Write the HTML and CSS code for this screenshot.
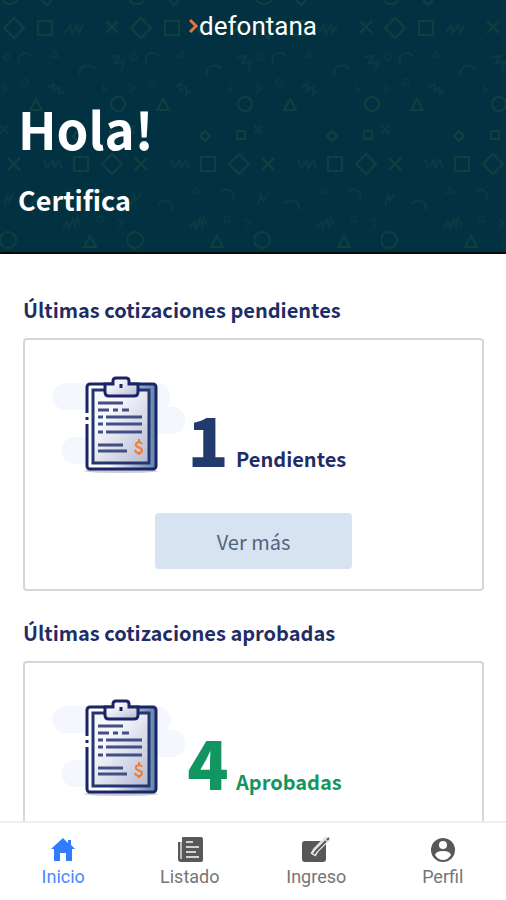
FILE: index.html
```
<!DOCTYPE html>
<html lang="es">
<head>
    <meta charset="UTF-8">
    <meta name="viewport" content="width=device-width, initial-scale=1.0">
    <title>Defontana</title>
    <link rel="stylesheet" href="styles.css">
</head>
<body>

    <header class="cabecera">
        <svg class="fondo" aria-hidden="true">
            <defs>
                <pattern id="figuras" width="127" height="254" patternUnits="userSpaceOnUse">
                    <g fill="none" stroke="#0e4040" stroke-width="2">
                        <path d="M14 18l10 10-10 10L4 28zM38 21h14v14H38zM106 21l12 12M118 21l-12 12"/>
                        <path d="M3 0a7 4 0 0 0 14 0M42 0l5 5 5-5"/>
                        <path d="M112 154l10 10-10 10-10-10zM74 157h14v14H74zM8 158l12 12M20 158L8 170"/>
                        <circle cx="118" cy="104" r="7"/>
                        <circle cx="8" cy="240" r="8"/>
                        <path d="M36 99l6 11H30zM90 236l6 11H84z"/>
                        <path d="M78 131l5 5-5 5-5-5zM110 131h8v8h-8z"/>
                    </g>
                    <g fill="none" stroke="#0a3b42" stroke-width="2">
                        <path d="M65 33l5-8 2 8 5-8 2 8 4-8M44 160l3 8 6-8 1 8 5-8 3 8"/>
                        <path d="M19 65c-3-14 9-14 13-9M80 75c-2-10 10-12 15-6"/>
                        <path d="M95 191c8-4 13 3 11 10M31 204c5-6 15-4 14 6"/>
                        <path d="M111 57l8-1-4 7 9-1-3 9M48 87l6-3-1 7 6-4 0 7 5-3"/>
                        <path d="M63 228l4-6 2 6 4-9 2 7 2-8 3 7M4 205l3-10 2 6 5-8"/>
                        <path d="M0 125l8 9M8 125l-8 9"/>
                    </g>
                    <g fill="none" stroke="#063744" stroke-width="2">
                        <path d="M55 51l3 6h-6zM69 187l4 6h-8zM103 84v7l4-2M2 84l5 4-5 5M117 219l6 4-5 6"/>
                        <circle cx="25" cy="82" r="3"/>
                        <circle cx="7" cy="57" r="3"/>
                        <circle cx="100" cy="219" r="3"/>
                    </g>
                </pattern>
            </defs>
            <rect width="100%" height="100%" fill="url(#figuras)"/>
        </svg>
        <div class="logo">
            <svg width="10" height="16" viewBox="0 0 10 16" aria-hidden="true">
                <path d="M1 2l6 6-6 6" fill="none" stroke="#e0763a" stroke-width="3"/>
            </svg>
            <span>defontana</span>
        </div>
        <h1>Hola!</h1>
        <p class="empresa">Certifica</p>
    </header>

    <main class="contenido">
        <section>
            <h2>Últimas cotizaciones pendientes</h2>
            <div class="tarjeta">
                <div class="resumen">
                    <svg class="dibujo" width="134" height="100" viewBox="0 0 134 100" aria-hidden="true">
                        <defs>
                            <linearGradient id="hoja" x1="0" y1="0" x2="1" y2="1">
                                <stop offset="0.3" stop-color="#f6f8fd"/>
                                <stop offset="1" stop-color="#b5b9d0"/>
                            </linearGradient>
                            <linearGradient id="tabla" x1="0" y1="0" x2="1" y2="0">
                                <stop offset="0.3" stop-color="#ffffff"/>
                                <stop offset="1" stop-color="#5f82ac"/>
                            </linearGradient>
                        </defs>
                        <g id="portapapeles">
                            <path d="M14 7h89a14 14 0 0 1 11 24h6a13 13 0 0 1 0 27h-20v30H23a13 13 0 0 1 0-27h20V34H14a13 13 0 0 1 0-27z" fill="#f4f7fd"/>
                            <ellipse cx="69" cy="95" rx="37" ry="2" fill="#c9ccd6"/>
                            <rect x="35" y="8" width="69" height="85" rx="3" fill="url(#tabla)" stroke="#1b2466" stroke-width="3"/>
                            <rect x="41" y="14" width="56" height="73" fill="url(#hoja)" stroke="#27356f" stroke-width="3"/>
                            <path d="M32 37h6v11h-6z" fill="#fff"/>
                            <path d="M35 41v3" stroke="#1b2466" stroke-width="3"/>
                            <path d="M53 8h8V5q0-3 3-3h10q3 0 3 3v3h9v8q0 4-4 4H57q-4 0-4-4z" fill="url(#hoja)" stroke="#1b2466" stroke-width="3"/>
                            <path d="M69 8v4" stroke="#1b2466" stroke-width="3"/>
                            <path d="M46 27h25M46 69h25M46 75h29M54 41h36M54 48h36M54 56h36M46 41h5M46 48h5M46 56h5M46 34h11M61 34h5M70 34h7" stroke="#414f82" stroke-width="3"/>
                            <path d="M90 68c-1-3-7-2-6 1 0 3 6 2 6 5 0 4-6 4-7 0M87 63v3M87 76v3" fill="none" stroke="#f47b2c" stroke-width="2"/>
                        </g>
                    </svg>
                    <span class="numero">1</span>
                    <span class="estado">Pendientes</span>
                </div>
                <button class="boton" type="button">Ver más</button>
            </div>
        </section>

        <section>
            <h2>Últimas cotizaciones aprobadas</h2>
            <div class="tarjeta aprobadas">
                <div class="resumen">
                    <svg class="dibujo" width="134" height="100" viewBox="0 0 134 100" aria-hidden="true">
                        <use href="#portapapeles"/>
                    </svg>
                    <span class="numero">4</span>
                    <span class="estado">Aprobadas</span>
                </div>
            </div>
        </section>
    </main>

    <nav class="menu">
        <a href="#" class="activo">
            <svg width="26" height="26" viewBox="0 0 26 26" aria-hidden="true">
                <path d="M13 1L1 12h3v12h6v-8h6v8h6V12h3l-4-4V3h-3v3z"/>
            </svg>
            Inicio
        </a>
        <a href="#">
            <svg width="26" height="26" viewBox="0 0 26 26" aria-hidden="true">
                <path d="M1 5h3v17h1V1q0-1 1-1h18q2 0 2 2v21q0 2-2 2H4q-3 0-3-3z"/>
                <path d="M9 5h7M9 10h13M9 15h10M9 20h13" stroke="#d2d2d2" stroke-width="2"/>
                <path d="M4 5v17" stroke="#bdbdbd" stroke-width="2"/>
            </svg>
            Listado
        </a>
        <a href="#">
            <svg width="28" height="26" viewBox="0 0 28 26" aria-hidden="true">
                <rect y="4" width="24" height="21" rx="3"/>
                <path d="M26 1L14 13l-3 5" fill="none" stroke="#e4e4e4" stroke-width="6" stroke-linejoin="round"/>
                <path d="M24 4L14 14l-2 3M25 3l2-2" fill="none" stroke="#585858" stroke-width="2"/>
            </svg>
            Ingreso
        </a>
        <a href="#">
            <svg width="26" height="26" viewBox="0 0 26 26" aria-hidden="true">
                <circle cx="13" cy="13" r="12"/>
                <circle cx="13" cy="8" r="4" fill="#fff"/>
                <path d="M5 18q1-4 8-4t8 4q-3 5-8 5t-8-5z" fill="#fff"/>
            </svg>
            Perfil
        </a>
    </nav>

</body>
</html>
```
FILE: styles.css
```
@charset "utf-8";

*{
    padding: 0;
    margin: 0;
    box-sizing: border-box;
}
body{
    display: flex;
    flex-direction: column;
    height: 100vh;
    background-color: white;
    color: #1f2d66;
    font-family: "Noto Sans CJK SC", "Noto Sans", sans-serif;
}
.cabecera{
    position: relative;
    flex: none;
    padding: 8px 18px 34px;
    background-color: #023142;
    border-bottom: 2px solid #0a0a0a;
    color: white;
}
.fondo{
    position: absolute;
    top: 0;
    left: 0;
    width: 100%;
    height: 100%;
}
.logo{
    position: relative;
    display: flex;
    justify-content: center;
    align-items: center;
    font: 26px/36px Roboto, sans-serif;
}
.cabecera h1{
    position: relative;
    margin-top: 50px;
    font-size: 51px;
    line-height: 68px;
}
.empresa{
    position: relative;
    margin-top: 20px;
    font-size: 27px;
    font-weight: bold;
    line-height: 36px;
}
.contenido{
    flex: 1;
    min-height: 0;
    padding: 42px 22px 0 23px;
    overflow: hidden auto;
    scrollbar-width: none;
}
section{
    margin-bottom: 28px;
}
h2{
    margin-bottom: 14px;
    font-size: 20px;
    line-height: 28px;
}
.tarjeta{
    min-height: 253px;
    padding: 36px 27px 20px;
    border: 2px solid #d6d6d6;
    border-radius: 4px;
}
.resumen{
    display: flex;
    align-items: baseline;
}
.dibujo{
    align-self: flex-start;
}
.numero{
    width: 44px;
    margin-right: 6px;
    font-size: 68px;
    font-weight: 900;
    line-height: 124px;
    text-align: center;
    color: #233a6c;
}
.estado{
    font-size: 20px;
    font-weight: bold;
}
.aprobadas .numero,
.aprobadas .estado{
    color: #129561;
}
.boton{
    display: block;
    width: 197px;
    height: 56px;
    margin: 13px auto 0;
    border: none;
    border-radius: 4px;
    background-color: #d8e3f1;
    color: #52637c;
    font: 20px "Noto Sans CJK SC", "Noto Sans", sans-serif;
}
.menu{
    flex: none;
    display: flex;
    padding: 14px 0 12px;
    border-top: 2px solid #eeeeee;
    background-color: white;
}
.menu a{
    flex: 1;
    display: flex;
    flex-direction: column;
    align-items: center;
    gap: 3px;
    color: #757575;
    font: 18px/22px Roboto, sans-serif;
    text-decoration: none;
}
.menu svg{
    fill: #585858;
}
.menu .activo{
    color: #4a88ff;
}
.menu .activo svg{
    fill: #327bfa;
}
```
